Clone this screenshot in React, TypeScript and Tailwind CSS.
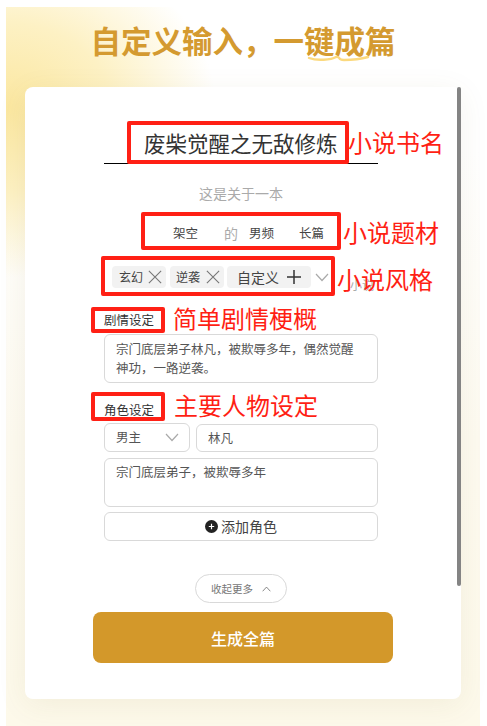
import React from "react";

const font = { fontFamily: '"Noto Sans CJK SC", "Noto Sans", sans-serif' };

function X({ size = 16, color = "#777" }: { size?: number; color?: string }) {
  return (
    <svg width={size} height={size} viewBox="0 0 16 16" fill="none" stroke={color} strokeWidth="1.3">
      <path d="M1 1 L15 15 M15 1 L1 15" />
    </svg>
  );
}

function Chevron({ w = 14, h = 9, color = "#aaa", up = false }: { w?: number; h?: number; color?: string; up?: boolean }) {
  return (
    <svg width={w} height={h} viewBox="0 0 14 9" fill="none" stroke={color} strokeWidth="1.2">
      <path d={up ? "M1 8 L7 1.5 L13 8" : "M1 1 L7 7.5 L13 1"} />
    </svg>
  );
}

function Note({ className, children }: { className: string; children: React.ReactNode }) {
  return <div className={"absolute text-[#ff1f14] text-[24px] leading-[30px] whitespace-nowrap " + className}>{children}</div>;
}

function Box({ className }: { className: string }) {
  return <div className={"absolute border-[4px] border-[#ff2015] rounded-[2px] " + className} />;
}

export default function App() {
  return (
    <div style={font} className="relative w-[487px] h-[726px] overflow-hidden bg-white">
      <div className="ml-[6px] mt-[7px] w-[474px] h-[719px] flex flex-col items-center bg-[radial-gradient(ellipse_210px_170px_at_0%_14%,#fbe7a0_0%,#fdf1c4_50%,rgba(255,255,255,0)_100%),linear-gradient(to_bottom,#ffffff_20%,#fdfaf0_60%,#fdf9ea_100%)]">
        <h1 className="mt-[11px] h-[44px] text-[30.5px] leading-[44px] font-semibold text-[#d49a30] text-center">自定义输入，一键成篇</h1>
        <div className="relative mt-[25px] w-[436px] h-[612px] pr-[4px] bg-white rounded-[8px] shadow-[0_6px_30px_rgba(120,100,40,0.08)] flex flex-col items-center">
          <div className="absolute right-0 top-0 w-[4px] h-[499px] bg-[#848484] rounded-[2px]" />
          <div className="mt-[38px] w-[274px] h-[39px] border-b border-black text-[21.5px] leading-[36px] text-[#333] pl-[40px] whitespace-nowrap">废柴觉醒之无敌修炼</div>
          <div className="mt-[19px] text-[14px] leading-[20px] text-[#aaaaaa]">这是关于一本</div>
          <div className="mt-[20px] w-[274px] h-[20px] flex items-center text-[12.5px] text-[#444] pl-[69px]">
            <span>架空</span>
            <span className="ml-[26px] text-[14px] text-[#aaa]">的</span>
            <span className="ml-[11px]">男频</span>
            <span className="ml-[25px]">长篇</span>
          </div>
          <div className="mt-[23px] w-[274px] h-[22px] flex items-center text-[12px] text-[#444] pl-[8px]">
            <span className="w-[54px] h-[22px] bg-[#f2f2f2] rounded-[4px] flex items-center pl-[7px] gap-[5px]">玄幻<X size={14} /></span>
            <span className="ml-[4px] w-[54px] h-[22px] bg-[#f2f2f2] rounded-[4px] flex items-center pl-[6px] gap-[6px]">逆袭<X size={14} /></span>
            <span className="ml-[3px] w-[84px] h-[22px] bg-[#f2f2f2] rounded-[4px] flex items-center pl-[10px] text-[14px]">
              自定义
              <svg className="ml-[8px]" width="14" height="14" viewBox="0 0 14 14" stroke="#333" strokeWidth="1.5"><path d="M0 7 H14 M7 0 V14" /></svg>
            </span>
            <span className="ml-[4px]"><Chevron /></span>
          </div>
          <div className="mt-[23px] w-[274px] text-[12.5px] leading-[18px] text-[#333]">剧情设定</div>
          <div className="mt-[5px] w-[274px] h-[49px] border border-[#d9d9d9] rounded-[6px] px-[11px] py-[4px] text-[12.5px] leading-[19px] text-[#555]">
            <span className="whitespace-nowrap">宗门底层弟子林凡，被欺辱多年，偶然觉醒</span><br />神功，一路逆袭。
          </div>
          <div className="mt-[18px] w-[274px] text-[12.5px] leading-[18px] text-[#333]">角色设定</div>
          <div className="mt-[4px] w-[274px] flex gap-[6px] items-end">
            <div className="w-[86px] h-[29px] border border-[#d9d9d9] rounded-[6px] flex items-center justify-between pl-[11px] pr-[10px] text-[12.5px] text-[#555]">男主<Chevron /></div>
            <div className="flex-1 h-[28px] border border-[#d9d9d9] rounded-[6px] flex items-center pl-[11px] text-[12.5px] text-[#555]">林凡</div>
          </div>
          <div className="mt-[6px] w-[274px] h-[49px] border border-[#d9d9d9] rounded-[6px] px-[11px] py-[3px] text-[12.5px] leading-[19px] text-[#555]">宗门底层弟子，被欺辱多年</div>
          <div className="mt-[5px] w-[274px] h-[29px] border border-[#d9d9d9] rounded-[6px] flex items-center justify-center gap-[3px] text-[14px] text-[#444]">
            <svg width="13" height="13" viewBox="0 0 13 13"><circle cx="6.5" cy="6.5" r="6.5" fill="#222" /><path d="M3.8 6.5 H9.2 M6.5 3.8 V9.2" stroke="#fff" strokeWidth="1.2" /></svg>
            添加角色
          </div>
          <div className="mt-[33px] w-[92px] h-[29px] border border-[#d9d9d9] rounded-full flex items-center justify-center gap-[9px] text-[10.5px] text-[#777]">
            收起更多<Chevron w={9} h={6} color="#666" up />
          </div>
          <div className="mt-[9px] ml-[4px] w-[300px] h-[51px] bg-[#d3982a] rounded-[8px] flex items-center justify-center text-[16px] font-medium text-white">生成全篇</div>
        </div>
      </div>

      <svg className="absolute left-[307px] top-[54px]" width="63" height="10" viewBox="0 0 63 10" fill="none" stroke="#fbd97e" strokeWidth="2.4" strokeLinecap="round">
        <path d="M2 4 C10 7 24 6 29 3 C34 2 30 6 37 6 C45 6 54 5 61 3" />
      </svg>

      <div className="absolute left-[350px] top-[276px] text-[12px] text-[#aaa]">小说</div>

      <Box className="left-[127px] top-[121px] w-[222px] h-[43px]" />
      <Box className="left-[141px] top-[212px] w-[200px] h-[38px]" />
      <Box className="left-[101px] top-[256px] w-[234px] h-[40px]" />
      <Box className="left-[91px] top-[307px] w-[74px] h-[26px]" />
      <Box className="left-[91px] top-[392px] w-[74px] h-[29px]" />

      <Note className="left-[348px] top-[127px]">小说书名</Note>
      <Note className="left-[343px] top-[217px]">小说题材</Note>
      <Note className="left-[337px] top-[264px]">小说风格</Note>
      <Note className="left-[173px] top-[303px]">简单剧情梗概</Note>
      <Note className="left-[174px] top-[390px]">主要人物设定</Note>
    </div>
  );
}
